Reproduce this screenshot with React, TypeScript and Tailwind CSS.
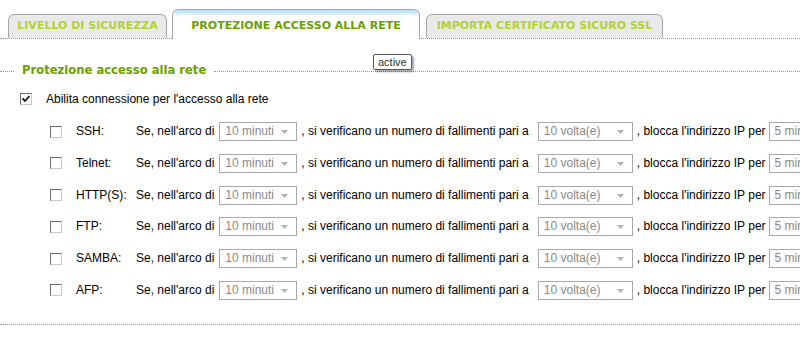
import React from "react";

const services = ["SSH:", "Telnet:", "HTTP(S):", "FTP:", "SAMBA:", "AFP:"];

// fake select box, like the old web ui
const Select = ({ value, className }: { value: string; className: string }) => (
  <div
    className={`relative h-[19px] shrink-0 border border-[#a9a9a9] bg-white pl-[5px] text-[#8a8a8a] leading-[17px] ${className}`}
  >
    {value}
    <svg className="absolute right-[8px] top-[7px]" width="7" height="4" viewBox="0 0 7 4">
      <path d="M0 0H7L3.5 4Z" fill="#b0b0b0" />
    </svg>
  </div>
);

const Checkbox = ({ checked = false }: { checked?: boolean }) => (
  <span className="relative inline-block h-[12px] w-[12px] shrink-0 border border-t-[#6b6b6b] border-l-[#6b6b6b] border-r-[#c8c8c8] border-b-[#c8c8c8] bg-white">
    {checked && (
      <svg className="absolute left-[1px] top-[1px]" width="8" height="8" viewBox="0 0 8 8">
        <path d="M0.5 3.5L3 6L7.5 1" stroke="#111" strokeWidth="1.8" fill="none" />
      </svg>
    )}
  </span>
);

const Tab = ({ label, active = false, className }: { label: string; active?: boolean; className: string }) => {
  if (active) {
    return (
      <div
        className={`relative -mb-px flex h-[30px] items-end justify-center rounded-t-[6px] border border-b-0 border-[#a8a8a8] bg-white pb-[5px] ${className}`}
      >
        <div className="absolute left-0 right-0 top-0 h-[7px] rounded-t-[5px] bg-gradient-to-b from-[#b9dcf5] to-white" />
        <span className="relative font-['DejaVu_Sans',sans-serif] text-[11px] font-bold text-[#6aa000]">{label}</span>
      </div>
    );
  }
  return (
    <div
      className={`flex h-[24px] items-center justify-center rounded-t-[6px] border border-b-0 border-[#a8a8a8] bg-[#e9e9e9] ${className}`}
    >
      <span className="font-['DejaVu_Sans',sans-serif] text-[11px] font-bold text-[#b2d22e]">{label}</span>
    </div>
  );
};

export default function App() {
  return (
    <div className="relative h-[357px] w-[800px] overflow-hidden bg-white font-['Liberation_Sans',Arial,sans-serif] text-[12px] text-black">
      {/* tabs */}
      <div className="flex h-[39px] items-end border-b border-dotted border-[#9a9a9a] pl-[8px]">
        <Tab label="LIVELLO DI SICUREZZA" className="w-[159px]" />
        <Tab label="PROTEZIONE ACCESSO ALLA RETE" active className="ml-[5px] w-[248px]" />
        <Tab label="IMPORTA CERTIFICATO SICURO SSL" className="ml-[6px] w-[237px]" />
      </div>

      {/* legend */}
      <div className="mt-[25px] flex h-[14px] items-center">
        <div className="h-px w-[14px] border-t border-dotted border-[#9a9a9a]" />
        <span className="px-[8px] font-['DejaVu_Sans',sans-serif] text-[11.6px] font-bold text-[#6aa000]">
          Protezione accesso alla rete
        </span>
        <div className="h-px flex-1 border-t border-dotted border-[#9a9a9a]" />
      </div>

      <div className="mt-[12px] flex items-center pl-[20px]">
        <Checkbox checked />
        <span className="ml-[14px]">Abilita connessione per l'accesso alla rete</span>
      </div>

      <div className="mt-[14px] flex flex-col">
        {services.map((s) => (
          <div key={s} className="flex h-[31.8px] items-start whitespace-nowrap pl-[50px]">
            <div className="flex h-[19px] items-center">
              <Checkbox />
            </div>
            <span className="ml-[14px] w-[60px] shrink-0 leading-[19px]">{s}</span>
            <span className="shrink-0 leading-[19px]">Se, nell'arco di</span>
            <Select value="10 minuti" className="ml-[5px] w-[78px]" />
            <span className="ml-[4px] shrink-0 leading-[19px]">, si verificano un numero di fallimenti pari a</span>
            <Select value="10 volta(e)" className="ml-[9px] w-[95px]" />
            <span className="ml-[4px] shrink-0 leading-[19px]">, blocca l'indirizzo IP per</span>
            <Select value="5 minuti" className="ml-[3px] w-[78px]" />
          </div>
        ))}
      </div>

      <div className="mt-[11px] h-px border-t border-dotted border-[#9a9a9a]" />

      {/* tooltip */}
      <div className="absolute left-[373px] top-[54px] rounded-[2px] border border-[#5a5a5a] bg-white px-[4px] text-[11px] leading-[14px] text-[#333] shadow-[2px_2px_2px_rgba(0,0,0,0.35)]">
        active
      </div>
    </div>
  );
}
